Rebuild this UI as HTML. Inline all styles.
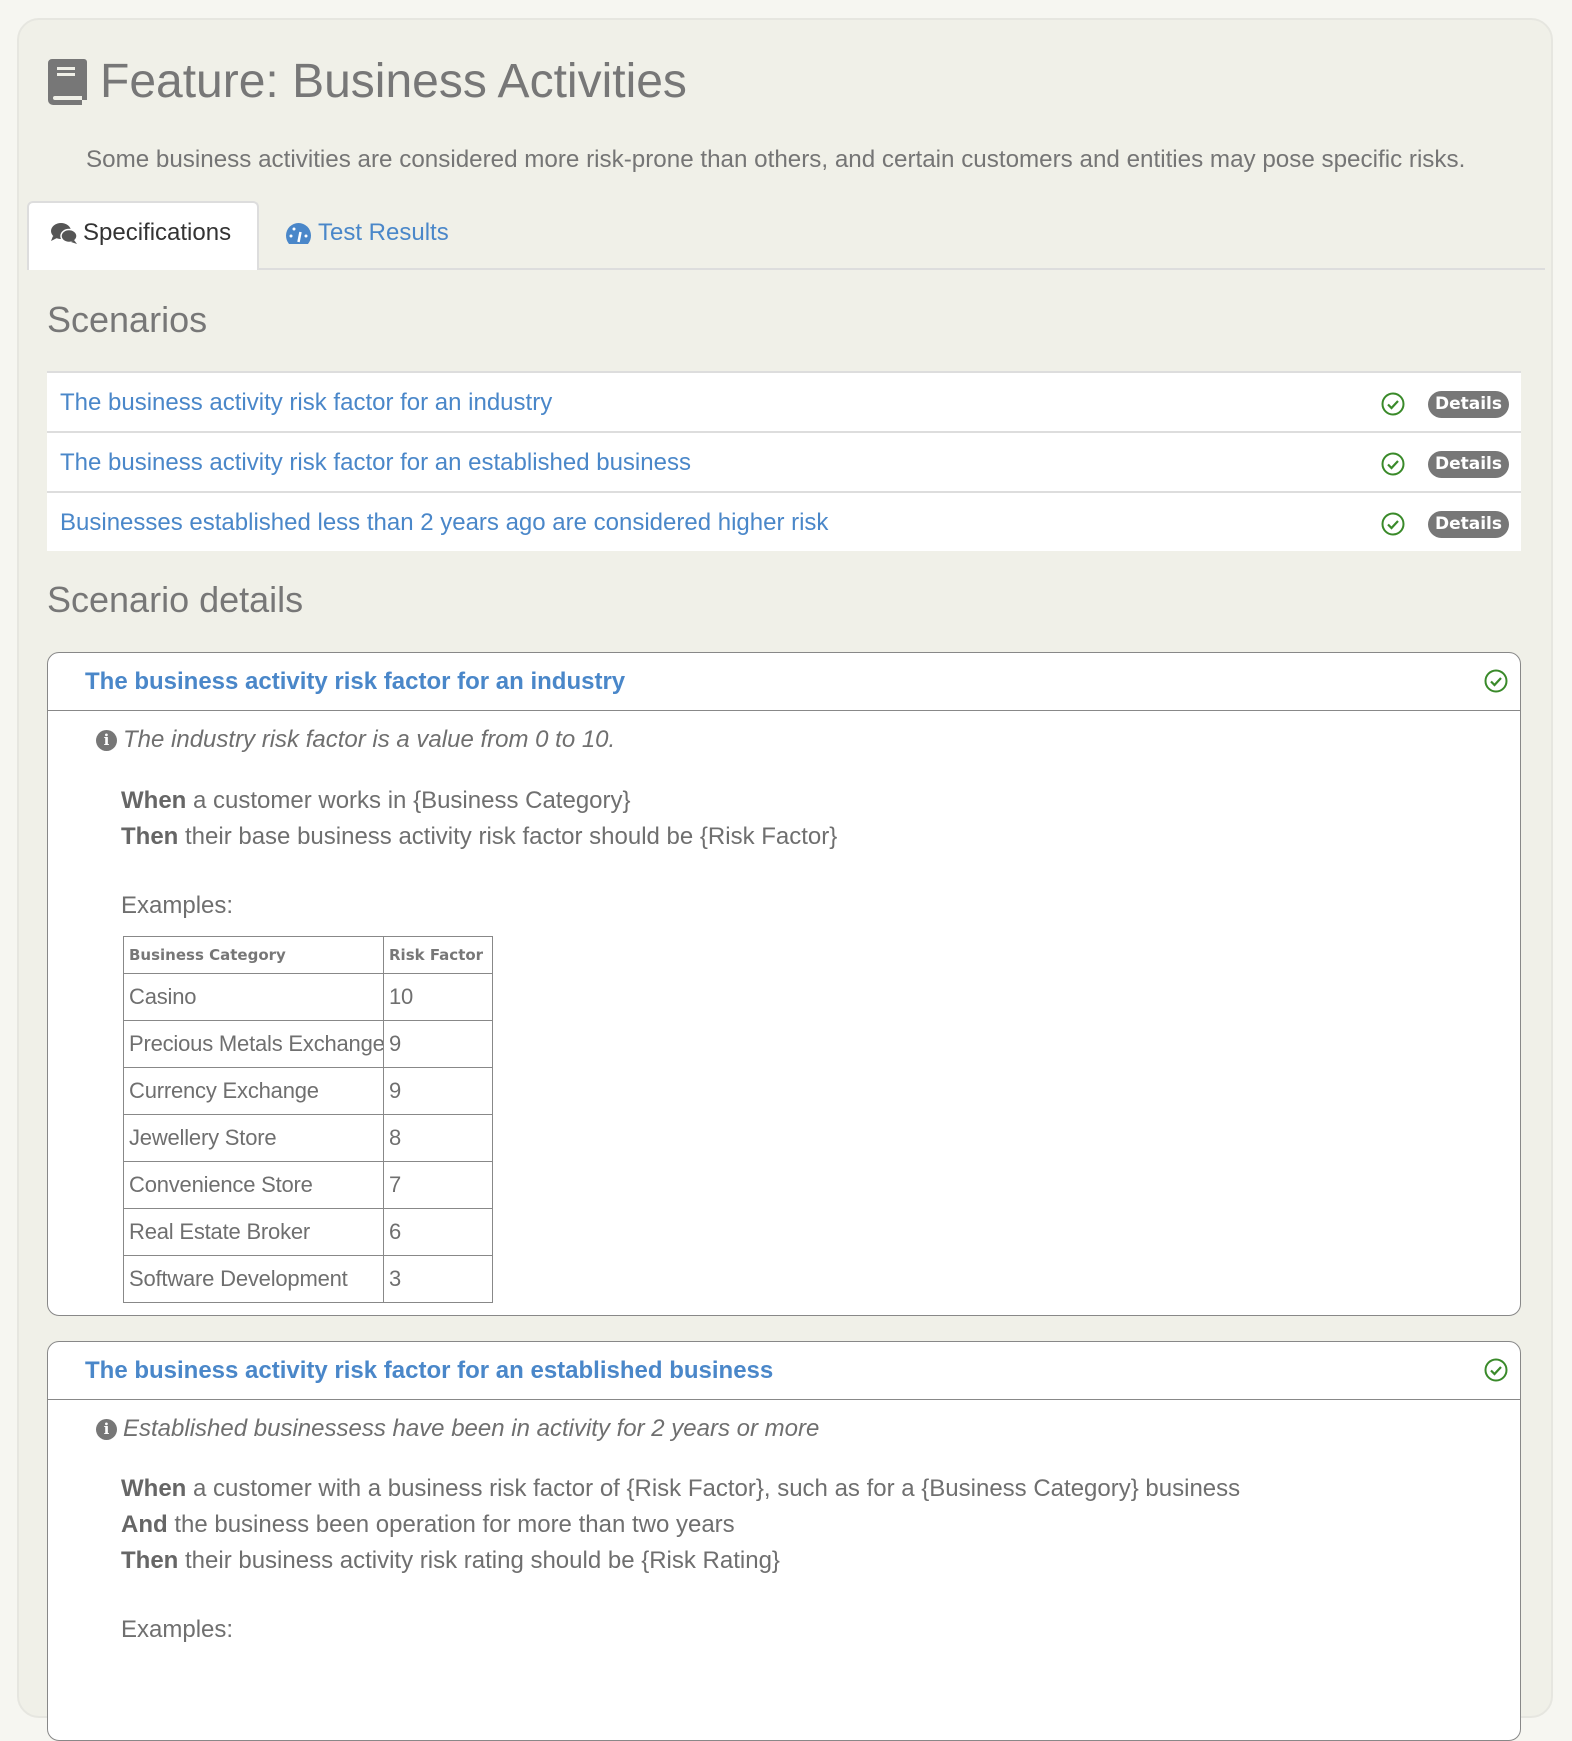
<!DOCTYPE html>
<html><head><meta charset="utf-8"><style>
*{margin:0;padding:0;box-sizing:border-box}
body{width:1572px;height:1632px;overflow:hidden;background:#f6f6f1;font-family:"Liberation Sans",Arial,sans-serif;color:#6f6f6f;position:relative}
.a{position:absolute;white-space:nowrap}
.panel{position:absolute;left:17px;top:18px;width:1536px;height:1700px;background:#f0f0e8;border:2px solid #e6e6e0;border-radius:22px}
.list{position:absolute;left:47px;top:371px;width:1474px;height:180px;background:#fff;border-top:2px solid #ddd}
.row{position:absolute;left:0;width:100%;height:60px;border-bottom:2px solid #ddd}
.row .t{position:absolute;left:13px;top:16px;font-size:24px;color:#4a87c9}
.badge{position:absolute;left:1381px;top:18px;width:81px;height:27px;border-radius:14px;background:#777;color:#fff;font:bold 17px "DejaVu Sans",sans-serif;text-align:center;line-height:27px}
.chk{position:absolute;left:1334px;top:19px}
.card{position:absolute;left:47px;width:1474px;background:#fff;border:1.5px solid #888;border-radius:12px;overflow:hidden}
.card .hd{height:58px;border-bottom:1.5px solid #888;position:relative}
.card .hd .t{position:absolute;left:37px;top:15px;font-size:24px;font-weight:bold;color:#4a87c9}
.card .hd svg{position:absolute;right:12px;top:16px}
.info{position:absolute;left:48px;font-size:24px;font-style:italic;color:#6f6f6f;white-space:nowrap}
.info i{display:inline-block;width:21px;height:21px;border-radius:50%;background:#777;color:#fff;font:bold 15px "DejaVu Serif",serif;text-align:center;line-height:21px;vertical-align:2px;margin-right:6px;font-style:normal}
.st{position:absolute;left:73px;font-size:24px;color:#6f6f6f;white-space:nowrap}
.st b{color:#666}
table{position:absolute;left:75px;border-collapse:collapse;font-size:22px;color:#6f6f6f;table-layout:fixed;width:369px;white-space:nowrap}
td,th{border:1.5px solid #888;height:47px;padding:0 5px;text-align:left;overflow:hidden;letter-spacing:-0.2px}
th{height:37px;font:bold 15px "DejaVu Sans",sans-serif;color:#777;padding:0 5px;letter-spacing:0}
</style></head><body>
<div class="panel"></div>
<svg class="a" style="left:48px;top:59px" width="40" height="46" viewBox="0 0 40 46"><path d="M4 0h32a3 3 0 0 1 3 3v38h-5v-4H7a2 2 0 0 0 0 4h27v5H5a5 5 0 0 1-5-5V4a4 4 0 0 1 4-4z" fill="#777"/><rect x="9" y="8" width="18" height="3" fill="#f0f0e8"/><rect x="9" y="14" width="18" height="3" fill="#f0f0e8"/></svg>
<div class="a" style="left:100px;top:54px;font-size:48px;color:#777">Feature: Business Activities</div>
<div class="a" style="left:86px;top:146px;font-size:24.2px;color:#757575">Some business activities are considered more risk-prone than others, and certain customers and entities may pose specific risks.</div>
<div class="a" style="left:27px;top:268px;width:1518px;height:2px;background:#ddd"></div>
<div class="a" style="left:27px;top:201px;width:232px;height:69px;background:#fff;border:2px solid #ddd;border-bottom:none;border-radius:6px 6px 0 0"></div>
<svg class="a" style="left:50px;top:222px" width="28" height="24" viewBox="0 0 28 24"><ellipse cx="11" cy="9" rx="10" ry="8" fill="#555"/><path d="M3 14l-2 5 6-3z" fill="#555"/><ellipse cx="19" cy="14" rx="8" ry="6.5" fill="#555" stroke="#fff" stroke-width="1.5"/><path d="M24 18l3 4-6-2z" fill="#555"/></svg>
<div class="a" style="left:83px;top:219px;font-size:24px;color:#333">Specifications</div>
<svg class="a" style="left:285px;top:222px" width="27" height="24" viewBox="0 0 27 24"><path d="M13.5 1A12.5 12.5 0 0 0 1 13.5c0 3 1 6 3 8.5h19c2-2.5 3-5.5 3-8.5A12.5 12.5 0 0 0 13.5 1z" fill="#4a87c9"/><path d="M13.5 20l2-10" stroke="#fff" stroke-width="2.5"/><circle cx="6" cy="14" r="1.5" fill="#fff"/><circle cx="9" cy="7" r="1.5" fill="#fff"/><circle cx="21" cy="14" r="1.5" fill="#fff"/></svg>
<div class="a" style="left:318px;top:219px;font-size:24px;color:#4a87c9">Test Results</div>
<div class="a" style="left:47px;top:299px;font-size:36px;color:#777">Scenarios</div>
<div class="list">
<div class="row" style="top:0"><div class="t">The business activity risk factor for an industry</div><svg class="chk" width="24" height="24" viewBox="0 0 24 24"><circle cx="12" cy="12" r="10.5" fill="none" stroke="#3a8a2a" stroke-width="2"/><path d="M7 12.5l3.5 3.5 6.5-7" fill="none" stroke="#3a8a2a" stroke-width="2.2"/></svg><div class="badge">Details</div></div>
<div class="row" style="top:60px"><div class="t">The business activity risk factor for an established business</div><svg class="chk" width="24" height="24" viewBox="0 0 24 24"><circle cx="12" cy="12" r="10.5" fill="none" stroke="#3a8a2a" stroke-width="2"/><path d="M7 12.5l3.5 3.5 6.5-7" fill="none" stroke="#3a8a2a" stroke-width="2.2"/></svg><div class="badge">Details</div></div>
<div class="row" style="top:120px;border:none"><div class="t">Businesses established less than 2 years ago are considered higher risk</div><svg class="chk" width="24" height="24" viewBox="0 0 24 24"><circle cx="12" cy="12" r="10.5" fill="none" stroke="#3a8a2a" stroke-width="2"/><path d="M7 12.5l3.5 3.5 6.5-7" fill="none" stroke="#3a8a2a" stroke-width="2.2"/></svg><div class="badge">Details</div></div>
</div>
<div class="a" style="left:47px;top:579px;font-size:36px;color:#777">Scenario details</div>

<div class="card" style="top:652px;height:664px">
<div class="hd"><div class="t">The business activity risk factor for an industry</div><svg width="24" height="24" viewBox="0 0 24 24"><circle cx="12" cy="12" r="10.5" fill="none" stroke="#3a8a2a" stroke-width="2"/><path d="M7 12.5l3.5 3.5 6.5-7" fill="none" stroke="#3a8a2a" stroke-width="2.2"/></svg></div>
<div class="info" style="top:73px"><i>i</i>The industry risk factor is a value from 0 to 10.</div>
<div class="st" style="top:134px"><b>When</b> a customer works in {Business Category}</div>
<div class="st" style="top:170px"><b>Then</b> their base business activity risk factor should be {Risk Factor}</div>
<div class="st" style="top:239px">Examples:</div>
<table style="top:283px"><colgroup><col style="width:260px"><col style="width:109px"></colgroup><tr><th>Business Category</th><th>Risk Factor</th></tr>
<tr><td>Casino</td><td>10</td></tr><tr><td>Precious Metals Exchange</td><td>9</td></tr><tr><td>Currency Exchange</td><td>9</td></tr><tr><td>Jewellery Store</td><td>8</td></tr><tr><td>Convenience Store</td><td>7</td></tr><tr><td>Real Estate Broker</td><td>6</td></tr><tr><td>Software Development</td><td>3</td></tr></table>
</div>

<div class="card" style="top:1341px;height:400px">
<div class="hd"><div class="t">The business activity risk factor for an established business</div><svg width="24" height="24" viewBox="0 0 24 24"><circle cx="12" cy="12" r="10.5" fill="none" stroke="#3a8a2a" stroke-width="2"/><path d="M7 12.5l3.5 3.5 6.5-7" fill="none" stroke="#3a8a2a" stroke-width="2.2"/></svg></div>
<div class="info" style="top:73px"><i>i</i>Established businessess have been in activity for 2 years or more</div>
<div class="st" style="top:133px"><b>When</b> a customer with a business risk factor of {Risk Factor}, such as for a {Business Category} business</div>
<div class="st" style="top:169px"><b>And</b> the business been operation for more than two years</div>
<div class="st" style="top:205px"><b>Then</b> their business activity risk rating should be {Risk Rating}</div>
<div class="st" style="top:274px">Examples:</div>
</div>
</body></html>
